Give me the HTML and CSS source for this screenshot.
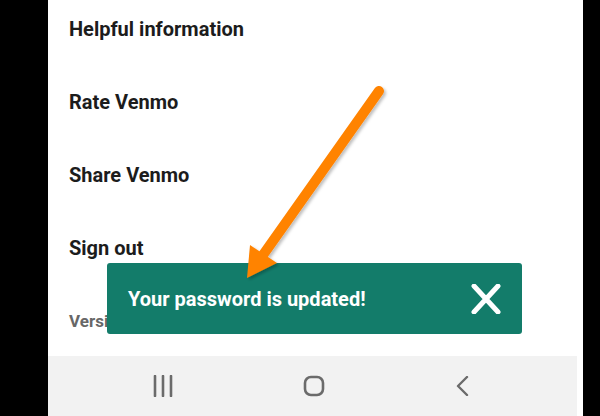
FILE: index.html
```html
<!DOCTYPE html>
<html lang="en">
    <head>
        <meta charset="UTF-8">
        <title>Venmo settings</title>
        <link rel="stylesheet" href="styles.css">
    </head>
    <body>
        <div class="phone">
            <div class="screen">
                <ul class="menu">
                    <li class="menu-item">Helpful information</li>
                    <li class="menu-item">Rate Venmo</li>
                    <li class="menu-item">Share Venmo</li>
                    <li class="menu-item">Sign out</li>
                    <li class="menu-item version">Version 8.20.0</li>
                </ul>

                <div class="toast">
                    <span class="toast-text">Your password is updated!</span>
                    <svg class="toast-close" width="32" height="30" viewBox="0 0 32 30">
                        <path d="M4 2 L28 28 M28 2 L4 28" stroke="#fff" stroke-width="5" stroke-linecap="round" fill="none"/>
                    </svg>
                </div>
            </div>

            <div class="navbar">
                <svg width="20" height="22" viewBox="0 0 20 22">
                    <path d="M2 1 V21 M10 1 V21 M18 1 V21" stroke="#6b6b6b" stroke-width="2.6" stroke-linecap="round"/>
                </svg>
                <svg width="22" height="22" viewBox="0 0 22 22">
                    <rect x="2" y="2" width="18" height="18" rx="6" stroke="#6b6b6b" stroke-width="2.6" fill="none"/>
                </svg>
                <svg width="14" height="20" viewBox="0 0 14 20">
                    <path d="M12 1 L3 10 L12 19" stroke="#6b6b6b" stroke-width="2.4" stroke-linecap="round" stroke-linejoin="round" fill="none"/>
                </svg>
            </div>
        </div>

        <!-- annotation arrow drawn over the screenshot -->
        <svg class="arrow" width="600" height="416" viewBox="0 0 600 416">
            <defs>
                <filter id="shadow" x="-20%" y="-20%" width="140%" height="140%">
                    <feDropShadow dx="2" dy="2" stdDeviation="1.5" flood-color="#000" flood-opacity="0.25"/>
                </filter>
            </defs>
            <g filter="url(#shadow)">
                <line x1="379" y1="91" x2="263" y2="255" stroke="#ff8300" stroke-width="10" stroke-linecap="round"/>
                <polygon points="247,278 250,245 277,263" fill="#ff8300"/>
            </g>
        </svg>
    </body>
</html>
```

FILE: styles.css
```css
body {
    margin: 0;
    width: 600px;
    height: 416px;
    background: #000;
    font-family: Roboto, "Liberation Sans", sans-serif;
    overflow: hidden;
}

.phone {
    width: 535px;
    height: 416px;
    margin-left: 48px;
    background: #fff;
    display: flex;
    flex-direction: column;
}

.screen {
    flex: 1;
    overflow: hidden;
}

.menu {
    list-style: none;
    margin: -8px 0 0 0;
    padding: 0 0 0 21px;
}

.menu-item {
    height: 73px;
    display: flex;
    align-items: center;
    font-size: 20px;
    font-weight: 700;
    color: #1c1c1c;
}

.version {
    font-size: 17px;
    color: #676767;
}

.toast {
    position: absolute;
    left: 107px;
    top: 263px;
    width: 415px;
    height: 71px;
    box-sizing: border-box;
    padding: 0 20px 0 21px;
    background: #137c6a;
    border-radius: 3px;
    display: flex;
    align-items: center;
    justify-content: space-between;
}

.toast-text {
    color: #fff;
    font-size: 20px;
    font-weight: 700;
}

.navbar {
    height: 60px;
    margin-right: 6px;
    background: #f2f2f2;
    display: flex;
    align-items: center;
    gap: 130px;
    padding-left: 105px;
}

.arrow {
    position: absolute;
    left: 0;
    top: 0;
    pointer-events: none;
}
```
